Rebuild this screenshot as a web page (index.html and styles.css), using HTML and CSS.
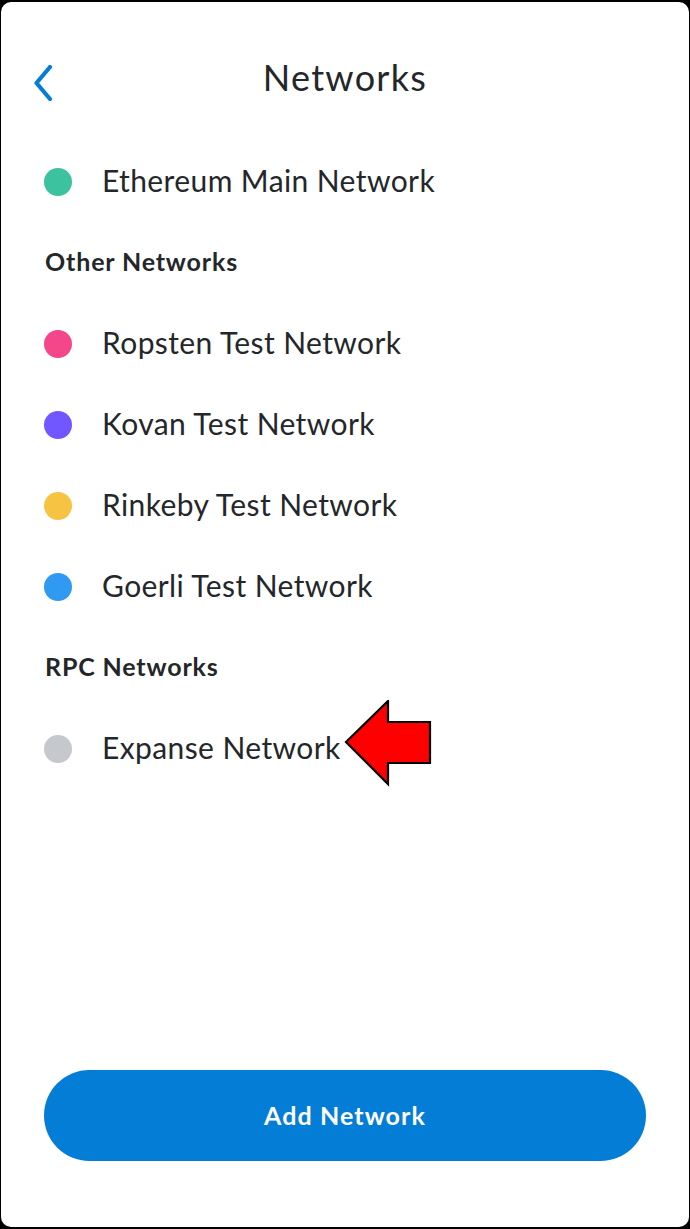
FILE: index.html
```html
<!DOCTYPE html>
<html lang="en">
<head>
<meta charset="utf-8">
<title>Networks</title>
<link rel="stylesheet" href="styles.css">
</head>
<body>
<div class="screen">
  <header class="header">
    <button class="back" aria-label="Back">
      <svg width="22" height="36" viewBox="0 0 22 36">
        <path d="M18 2 L4.5 18 L18 34" fill="none" stroke="#037DD6" stroke-width="4.2" stroke-linecap="round" stroke-linejoin="round"/>
      </svg>
    </button>
    <h1 class="title">Networks</h1>
  </header>

  <ul class="list">
    <li class="row"><span class="dot dot-main"></span><span class="name">Ethereum Main Network</span></li>
    <li class="section">Other Networks</li>
    <li class="row"><span class="dot dot-ropsten"></span><span class="name">Ropsten Test Network</span></li>
    <li class="row"><span class="dot dot-kovan"></span><span class="name">Kovan Test Network</span></li>
    <li class="row"><span class="dot dot-rinkeby"></span><span class="name">Rinkeby Test Network</span></li>
    <li class="row"><span class="dot dot-goerli"></span><span class="name">Goerli Test Network</span></li>
    <li class="section">RPC Networks</li>
    <li class="row row-marked">
      <span class="dot dot-rpc"></span><span class="name">Expanse Network</span>
      <svg class="pointer" width="90" height="88" viewBox="0 0 90 88">
        <path d="M2 42 L44 1 L44 22 L86 22 L86 63 L44 63 L44 84 Z" fill="#FF0000" stroke="#000" stroke-width="2.2" stroke-linejoin="miter"/>
      </svg>
    </li>
  </ul>

  <div class="footer">
    <button class="add">Add Network</button>
  </div>
</div>
</body>
</html>
```

FILE: styles.css
```css
html, body {
  margin: 0;
  padding: 0;
  background: #000;
}

body {
  font-family: "Lato", "Noto Sans", sans-serif;
  color: #24272A;
}

.screen {
  box-sizing: border-box;
  margin: 2px 1px;
  height: 1225px;
  background: #fff;
  border-radius: 10px;
  display: flex;
  flex-direction: column;
  overflow: hidden;
}

.header {
  position: relative;
  height: 56px;
  margin-top: 48px;
  display: flex;
  align-items: center;
  justify-content: center;
}

.back {
  position: absolute;
  left: 31px;
  top: 15px;
  padding: 0;
  border: 0;
  background: none;
  width: 22px;
  height: 36px;
}

.back svg {
  display: block;
}

.title {
  margin: 0;
  font-size: 36px;
  font-weight: 400;
  letter-spacing: 1.3px;
  padding-bottom: 3px;
}

.list {
  list-style: none;
  margin: 35px 0 0;
  padding: 0 0 0 43px;
}

.row,
.section {
  height: 81px;
  display: flex;
  align-items: center;
}

.row {
  position: relative;
  font-size: 30px;
  letter-spacing: 0.4px;
}

.name {
  padding-bottom: 4px;
}

.section {
  font-size: 25px;
  font-weight: 700;
  letter-spacing: 0.85px;
  padding-left: 1px;
  padding-bottom: 3px;
  box-sizing: border-box;
}

.dot {
  width: 28px;
  height: 28px;
  border-radius: 50%;
  flex: none;
  margin-right: 30px;
}

.dot-main { background: #3CC29E; }
.dot-ropsten { background: #F4478A; }
.dot-kovan { background: #7057FF; }
.dot-rinkeby { background: #F6C343; }
.dot-goerli { background: #3099F2; }
.dot-rpc { background: #C5C8CC; }

.pointer {
  position: absolute;
  left: 300px;
  top: -8px;
}

.footer {
  margin-top: auto;
  padding: 0 43px 66px;
}

.add {
  display: block;
  width: 100%;
  height: 91px;
  border: 0;
  border-radius: 46px;
  background: #037DD6;
  color: #fff;
  font-family: "Lato", "Noto Sans", sans-serif;
  font-size: 25px;
  font-weight: 700;
  letter-spacing: 1.1px;
  padding-bottom: 2px;
}
```
